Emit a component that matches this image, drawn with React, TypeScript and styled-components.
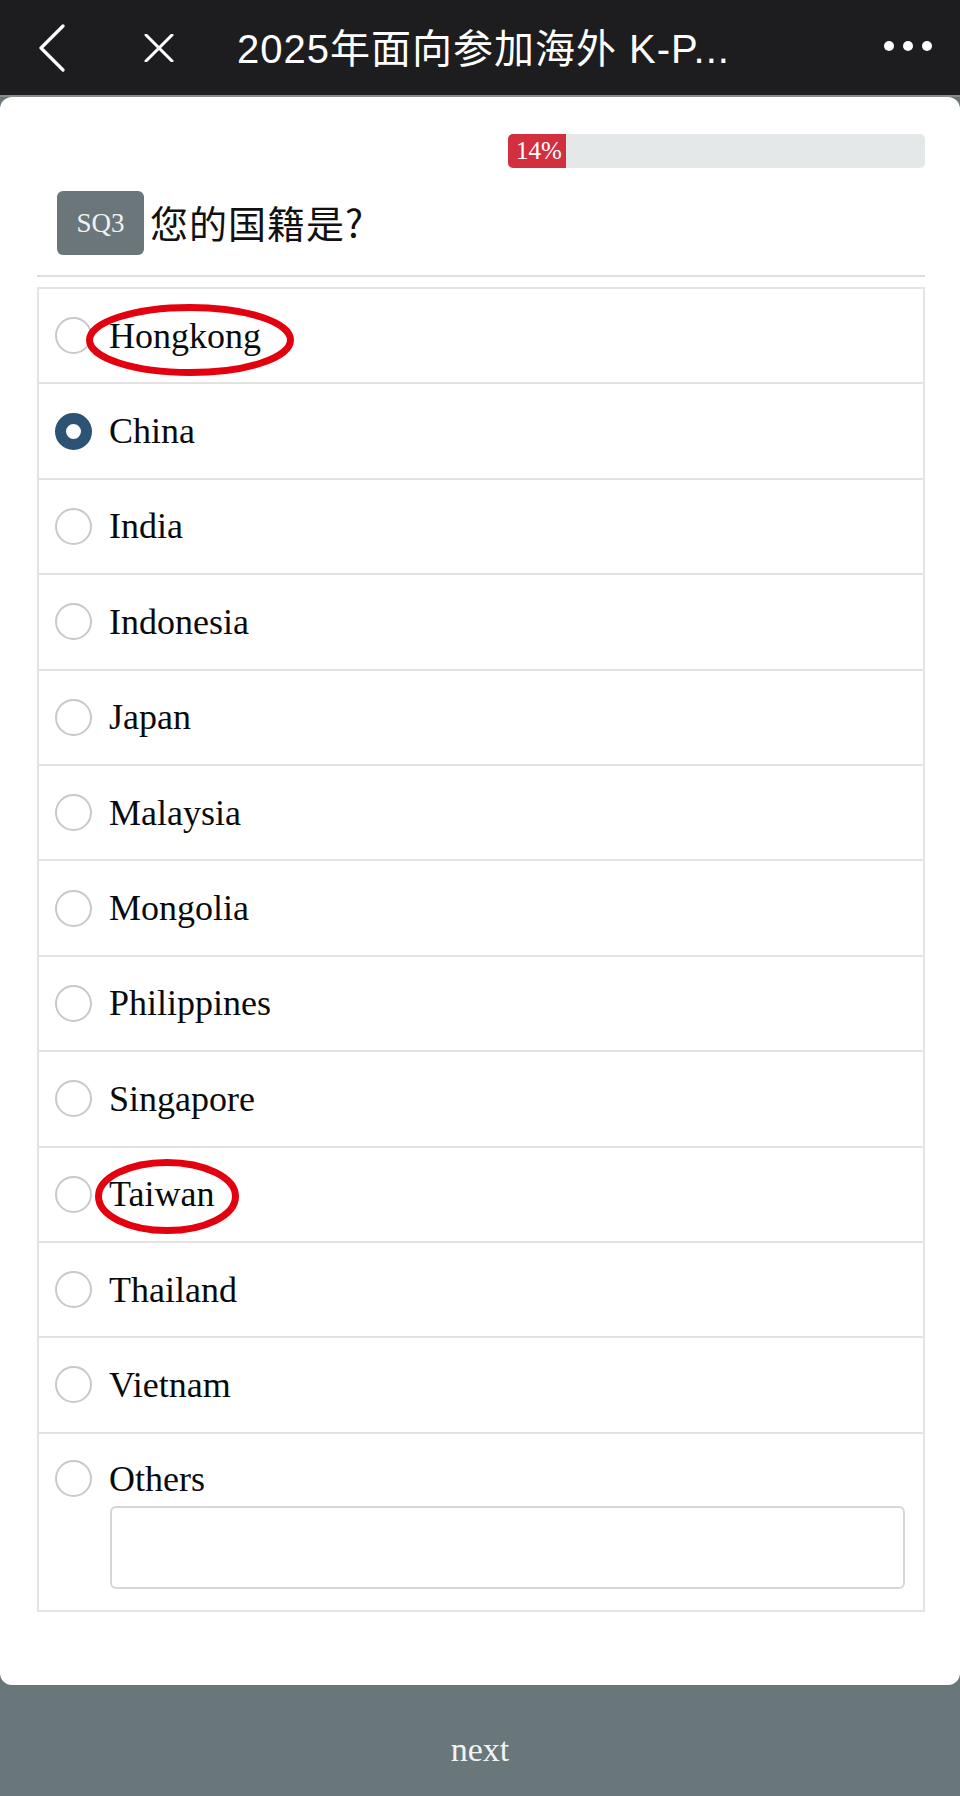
import React from "react";
import styled, { createGlobalStyle } from "styled-components";

const Global = createGlobalStyle`
  * { box-sizing: border-box; }
  html, body { margin: 0; padding: 0; background: #69767a; }
  body { font-family: "Liberation Serif", "Times New Roman", serif; }
`;

const Screen = styled.div`
  width: 960px;
  min-height: 1796px;
  display: flex;
  flex-direction: column;
  background: #69767a;
`;

const NavBar = styled.header`
  height: 97px;
  flex-shrink: 0;
  background: #1d1d20;
  border-bottom: 2px solid #8a8a8a;
  display: flex;
  align-items: center;
  color: #fff;
`;

const NavButton = styled.div<{ $w: number; $pl: number }>`
  width: ${(p) => p.$w}px;
  padding-left: ${(p) => p.$pl}px;
  display: flex;
  align-items: center;
  height: 100%;
`;

const Title = styled.div`
  flex: 1;
  font-family: "Liberation Sans", "Noto Sans CJK SC", sans-serif;
  font-size: 40px;
  letter-spacing: 1px;
  color: #fff;
  white-space: nowrap;
  margin-top: -4px;
`;

const Dots = styled.div`
  display: flex;
  gap: 9px;
  margin-right: 28px;
  margin-top: -4px;
`;

const Dot = styled.span`
  width: 10px;
  height: 10px;
  border-radius: 50%;
  background: #fff;
`;

const Sheet = styled.main`
  flex: 1;
  background: #fff;
  border-radius: 12px;
  padding: 37px 35px 72px 37px;
  display: flex;
  flex-direction: column;
`;

const ProgressTrack = styled.div`
  align-self: flex-end;
  width: 417px;
  height: 34px;
  background: #e4e8e9;
  border-radius: 5px;
  overflow: hidden;
  display: flex;
`;

const ProgressFill = styled.div`
  height: 100%;
  background: #d3303f;
  color: #fff;
  font-size: 25px;
  padding-left: 8px;
  display: flex;
  align-items: center;
`;

const QuestionRow = styled.div`
  margin-top: 23px;
  margin-left: 20px;
  display: flex;
  align-items: center;
  gap: 6px;
`;

const Badge = styled.div`
  width: 87px;
  height: 64px;
  border-radius: 6px;
  background: #6b767b;
  color: #eef2f3;
  font-size: 27px;
  display: flex;
  align-items: center;
  justify-content: center;
`;

const QuestionText = styled.h1`
  margin: 0;
  font-family: "Noto Sans CJK SC", "Liberation Sans", sans-serif;
  font-weight: 400;
  font-size: 38px;
  letter-spacing: 1px;
  color: #111;
  margin-top: -4px;
`;

const Rule = styled.hr`
  margin: 20px 0 10px;
  border: 0;
  height: 2px;
  background: #dedede;
`;

const List = styled.div`
  border: 2px solid #e4e4e4;
  display: flex;
  flex-direction: column;
`;

const Row = styled.div<{ $first?: boolean }>`
  position: relative;
  border-top: ${(p) => (p.$first ? "0" : "2px solid #e2e2e2")};
  display: flex;
  flex-direction: column;
`;

const OptionLine = styled.label<{ $h: number; $pt?: number }>`
  height: ${(p) => p.$h}px;
  padding-top: ${(p) => p.$pt ?? 0}px;
  box-sizing: content-box;
  display: flex;
  align-items: center;
  padding-left: 16px;
  gap: 17px;
  font-size: 36px;
  color: #0a0a0a;
`;

const Radio = styled.span<{ $checked?: boolean }>`
  width: 37px;
  height: 37px;
  border-radius: 50%;
  flex-shrink: 0;
  background: #fff;
  border: ${(p) => (p.$checked ? "11px solid #2c5374" : "2px solid #c9c9c9")};
`;

const OtherInput = styled.div`
  margin: 0 18px 21px 71px;
  height: 83px;
  border: 2px solid #d6d6d6;
  border-radius: 6px;
  background: #fff;
`;

const Annotation = styled.svg<{ $l: number; $t: number }>`
  position: absolute;
  left: ${(p) => p.$l}px;
  top: ${(p) => p.$t}px;
  pointer-events: none;
  overflow: visible;
`;

const Footer = styled.footer`
  height: 111px;
  flex-shrink: 0;
  display: flex;
  align-items: center;
  justify-content: center;
  color: #f2f4f4;
  font-size: 34px;
  padding-top: 18px;
`;

const options = [
  "Hongkong",
  "China",
  "India",
  "Indonesia",
  "Japan",
  "Malaysia",
  "Mongolia",
  "Philippines",
  "Singapore",
  "Taiwan",
  "Thailand",
  "Vietnam",
];

const marks: Record<string, { l: number; t: number; w: number; h: number }> = {
  Hongkong: { l: 47, t: 15, w: 208, h: 72 },
  Taiwan: { l: 56, t: 11, w: 144, h: 75 },
};

function Ellipse({ l, t, w, h }: { l: number; t: number; w: number; h: number }) {
  return (
    <Annotation $l={l} $t={t} width={w} height={h} viewBox={`0 0 ${w} ${h}`}>
      <ellipse
        cx={w / 2}
        cy={h / 2}
        rx={w / 2 - 3.5}
        ry={h / 2 - 3.5}
        fill="none"
        stroke="#e3000f"
        strokeWidth={7}
      />
    </Annotation>
  );
}

export default function App() {
  return (
    <>
      <Global />
      <Screen>
        <NavBar>
          <NavButton $w={105} $pl={38}>
            <svg width="28" height="48" viewBox="0 0 28 48">
              <polyline
                points="25,2 3,24 25,46"
                fill="none"
                stroke="#fff"
                strokeWidth="3.2"
                strokeLinecap="round"
                strokeLinejoin="round"
              />
            </svg>
          </NavButton>
          <NavButton $w={132} $pl={39}>
            <svg width="30" height="28" viewBox="0 0 30 28">
              <path d="M2 1 L28 27 M28 1 L2 27" stroke="#fff" strokeWidth="3" strokeLinecap="round" />
            </svg>
          </NavButton>
          <Title>2025年面向参加海外 K-P...</Title>
          <Dots>
            <Dot />
            <Dot />
            <Dot />
          </Dots>
        </NavBar>
        <Sheet>
          <ProgressTrack>
            <ProgressFill style={{ width: "58px" }}>14%</ProgressFill>
          </ProgressTrack>
          <QuestionRow>
            <Badge>SQ3</Badge>
            <QuestionText>您的国籍是?</QuestionText>
          </QuestionRow>
          <Rule />
          <List>
            {options.map((o, i) => (
              <Row key={o} $first={i === 0}>
                <OptionLine $h={93.4}>
                  <Radio $checked={o === "China"} />
                  <span>{o}</span>
                </OptionLine>
                {marks[o] && <Ellipse {...marks[o]} />}
              </Row>
            ))}
            <Row>
              <OptionLine $h={54} $pt={18}>
                <Radio />
                <span>Others</span>
              </OptionLine>
              <OtherInput />
            </Row>
          </List>
        </Sheet>
        <Footer>next</Footer>
      </Screen>
    </>
  );
}
